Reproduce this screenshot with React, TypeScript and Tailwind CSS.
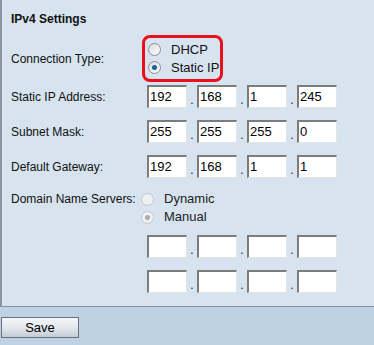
const font = { fontFamily: '"Liberation Sans", Arial, sans-serif' };

function Radio({ checked, disabled }: { checked?: boolean; disabled?: boolean }) {
  return (
    <span
      className={`relative inline-block h-[13px] w-[13px] rounded-full border ${
        disabled ? 'border-[#c4c8cc] bg-[#eef0f2]' : 'border-[#8a8f94] bg-gradient-to-br from-[#d8dadc] to-[#ffffff]'
      }`}
    >
      {checked && (
        <span
          className={`absolute left-[3px] top-[3px] h-[5px] w-[5px] rounded-full ${
            disabled ? 'bg-[#a8acb0]' : 'bg-[#1c5f9c]'
          }`}
        />
      )}
    </span>
  );
}

function Octet({ value }: { value: string }) {
  return (
    <div className="flex h-[23px] w-[40px] items-center border-l-2 border-t-2 border-r border-b border-l-[#7c7c7c] border-t-[#7c7c7c] border-r-[#e4e4e4] border-b-[#e4e4e4] bg-white pl-[1px] text-[13px] text-black">
      {value}
    </div>
  );
}

function IpRow({ values }: { values: string[] }) {
  return (
    <div className="flex items-end">
      {values.map((v, i) => (
        <div key={i} className="flex items-end">
          {i > 0 && <span className="w-[10px] pb-[2px] text-center text-[12px] leading-none">.</span>}
          <Octet value={v} />
        </div>
      ))}
    </div>
  );
}

export default function App() {
  return (
    <div className="h-[345px] w-[374px] bg-[#bfd2e3] text-[12px] text-[#111]" style={font}>
      <div className="h-[307px] border-b border-l-2 border-b-[#7d95a6] border-l-[#8896a2] bg-[#d7e3ef] pl-[9px] pt-[12px]">
        <div className="h-[14px] text-[12px] font-bold leading-[14px]">IPv4 Settings</div>

        <div className="mt-[9px] flex h-[47px] items-center">
          <div className="w-[131px] pt-[1px]">Connection Type:</div>
          <div className="flex h-[47px] w-[81px] flex-col justify-center gap-[4px] rounded-[8px] border-[3px] border-[#e8101a] pl-[3px]">
            <div className="flex h-[14px] items-center">
              <Radio />
              <span className="ml-[10px] text-[13px]">DHCP</span>
            </div>
            <div className="flex h-[14px] items-center">
              <Radio checked />
              <span className="ml-[10px] text-[13px]">Static IP</span>
            </div>
          </div>
        </div>

        <div className="mt-[3px] flex items-center">
          <div className="w-[136px]">Static IP Address:</div>
          <IpRow values={['192', '168', '1', '245']} />
        </div>
        <div className="mt-[12px] flex items-center">
          <div className="w-[136px]">Subnet Mask:</div>
          <IpRow values={['255', '255', '255', '0']} />
        </div>
        <div className="mt-[12px] flex items-center">
          <div className="w-[136px]">Default Gateway:</div>
          <IpRow values={['192', '168', '1', '1']} />
        </div>

        <div className="mt-[14px] flex">
          <div className="w-[130px] text-[12px] leading-[14px]">Domain Name Servers:</div>
          <div className="flex flex-col gap-[4px] text-[13px] text-[#222]">
            <div className="flex h-[14px] items-center">
              <Radio disabled />
              <span className="ml-[10px]">Dynamic</span>
            </div>
            <div className="flex h-[14px] items-center">
              <Radio checked disabled />
              <span className="ml-[10px]">Manual</span>
            </div>
          </div>
        </div>

        <div className="ml-[136px] mt-[11px] flex flex-col gap-[12px]">
          <IpRow values={['', '', '', '']} />
          <IpRow values={['', '', '', '']} />
        </div>
      </div>

      <div className="pl-[1px] pt-[10px]">
        <button className="h-[21px] w-[78px] border border-[#66727e] bg-gradient-to-b from-[#f4f6f8] via-[#e4e8ec] to-[#c4ccd4] text-[13px] text-black">
          Save
        </button>
      </div>
    </div>
  );
}
